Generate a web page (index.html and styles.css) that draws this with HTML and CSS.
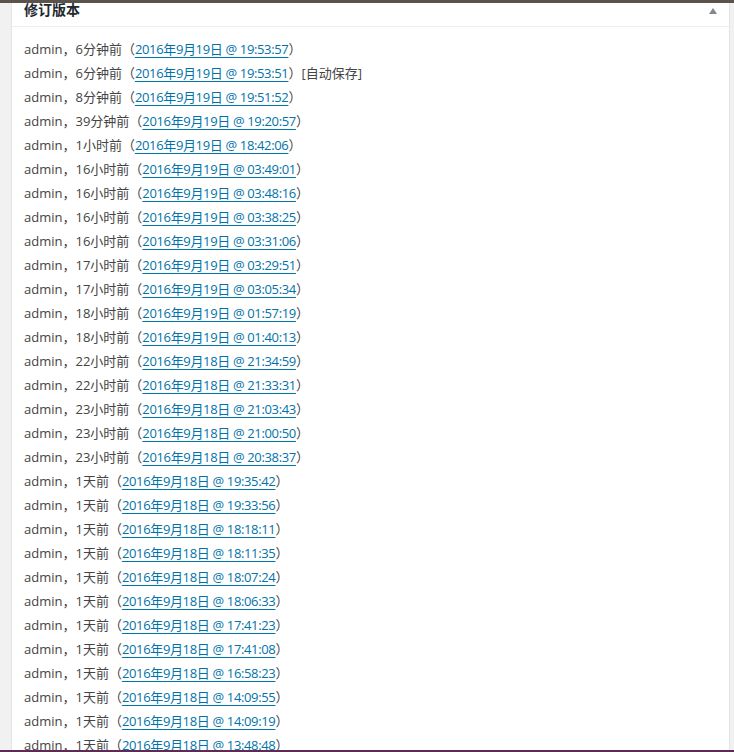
FILE: index.html
```html
<!DOCTYPE html>
<html lang="zh-CN">
<head>
    <meta charset="UTF-8">
    <title>修订版本</title>
    <link rel="stylesheet" href="styles.css">
</head>
<body>
    <div class="topbar"></div>
    <div class="wrap">
        <div class="postbox">
            <div class="postbox-header">
                <h2>修订版本</h2>
                <svg class="toggle" width="8" height="6" viewBox="0 0 8 6"><path d="M0 6 L4 0 L8 6 Z" fill="#82878c"/></svg>
            </div>
            <ul class="revisions">
                <li>admin，6分钟前（<a href="#">2016年9月19日 @ 19:53:57</a>）</li>
                <li>admin，6分钟前（<a href="#">2016年9月19日 @ 19:53:51</a>）[自动保存]</li>
                <li>admin，8分钟前（<a href="#">2016年9月19日 @ 19:51:52</a>）</li>
                <li>admin，39分钟前（<a href="#">2016年9月19日 @ 19:20:57</a>）</li>
                <li>admin，1小时前（<a href="#">2016年9月19日 @ 18:42:06</a>）</li>
                <li>admin，16小时前（<a href="#">2016年9月19日 @ 03:49:01</a>）</li>
                <li>admin，16小时前（<a href="#">2016年9月19日 @ 03:48:16</a>）</li>
                <li>admin，16小时前（<a href="#">2016年9月19日 @ 03:38:25</a>）</li>
                <li>admin，16小时前（<a href="#">2016年9月19日 @ 03:31:06</a>）</li>
                <li>admin，17小时前（<a href="#">2016年9月19日 @ 03:29:51</a>）</li>
                <li>admin，17小时前（<a href="#">2016年9月19日 @ 03:05:34</a>）</li>
                <li>admin，18小时前（<a href="#">2016年9月19日 @ 01:57:19</a>）</li>
                <li>admin，18小时前（<a href="#">2016年9月19日 @ 01:40:13</a>）</li>
                <li>admin，22小时前（<a href="#">2016年9月18日 @ 21:34:59</a>）</li>
                <li>admin，22小时前（<a href="#">2016年9月18日 @ 21:33:31</a>）</li>
                <li>admin，23小时前（<a href="#">2016年9月18日 @ 21:03:43</a>）</li>
                <li>admin，23小时前（<a href="#">2016年9月18日 @ 21:00:50</a>）</li>
                <li>admin，23小时前（<a href="#">2016年9月18日 @ 20:38:37</a>）</li>
                <li>admin，1天前（<a href="#">2016年9月18日 @ 19:35:42</a>）</li>
                <li>admin，1天前（<a href="#">2016年9月18日 @ 19:33:56</a>）</li>
                <li>admin，1天前（<a href="#">2016年9月18日 @ 18:18:11</a>）</li>
                <li>admin，1天前（<a href="#">2016年9月18日 @ 18:11:35</a>）</li>
                <li>admin，1天前（<a href="#">2016年9月18日 @ 18:07:24</a>）</li>
                <li>admin，1天前（<a href="#">2016年9月18日 @ 18:06:33</a>）</li>
                <li>admin，1天前（<a href="#">2016年9月18日 @ 17:41:23</a>）</li>
                <li>admin，1天前（<a href="#">2016年9月18日 @ 17:41:08</a>）</li>
                <li>admin，1天前（<a href="#">2016年9月18日 @ 16:58:23</a>）</li>
                <li>admin，1天前（<a href="#">2016年9月18日 @ 14:09:55</a>）</li>
                <li>admin，1天前（<a href="#">2016年9月18日 @ 14:09:19</a>）</li>
                <li>admin，1天前（<a href="#">2016年9月18日 @ 13:48:48</a>）</li>
            </ul>
        </div>
    </div>
    <div class="bottombar"></div>
</body>
</html>
```

FILE: styles.css
```css
html, body {
    margin: 0;
    padding: 0;
    height: 752px;
    overflow: hidden;
}

body {
    background: #f1f1f1;
    font-family: "Open Sans", "Noto Sans CJK SC", sans-serif;
    font-size: 13px;
    color: #444;
    display: flex;
    flex-direction: column;
}

.topbar {
    height: 3px;
    background: #5b534b;
    flex: none;
}

.wrap {
    flex: 1;
    min-height: 0;
    padding: 0 4px 0 11px;
    display: flex;
}

.postbox {
    flex: 1;
    background: #fff;
    border-left: 1px solid #e5e5e5;
    border-right: 1px solid #e5e5e5;
    overflow: hidden;
}

.postbox-header {
    height: 23px;
    border-bottom: 1px solid #eee;
    display: flex;
    align-items: center;
    justify-content: space-between;
    padding: 0 12px 0 12px;
}

.postbox-header h2 {
    margin: -10px 0 0 0;
    font-size: 14px;
    font-weight: bold;
    color: #23282d;
    line-height: 1;
}

.toggle {
    margin-top: -8px;
}

.revisions {
    list-style: none;
    margin: 0;
    padding: 10px 12px 0 12px;
}

.revisions li {
    line-height: 24px;
    height: 24px;
    white-space: nowrap;
}

.revisions a {
    color: #0073aa;
    text-decoration: underline;
    text-underline-offset: 3px;
    letter-spacing: -0.35px;
}

.bottombar {
    height: 2px;
    background: #5c2a52;
    flex: none;
}
```
